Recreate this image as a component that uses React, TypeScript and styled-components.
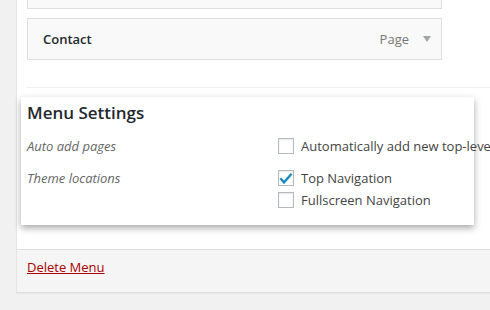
import styled, { createGlobalStyle } from "styled-components";

const GlobalStyle = createGlobalStyle`
  html, body {
    margin: 0;
    padding: 0;
    overflow: hidden;
    background: #f1f1f1;
    font-family: "Open Sans", "Liberation Sans", sans-serif;
    font-size: 13px;
    color: #444;
  }
`;

const Page = styled.div`
  width: 490px;
  height: 310px;
  overflow: hidden;
  padding-left: 16px;
  box-sizing: border-box;
`;

const Panel = styled.div`
  width: 520px;
  background: #fff;
  border-left: 1px solid #e5e5e5;
  border-bottom: 1px solid #dfdfdf;
  box-shadow: 0 1px 1px rgba(0, 0, 0, 0.04);
`;

const Body = styled.div`
  padding: 0 0 0 10px;
`;

const ItemList = styled.ul`
  list-style: none;
  margin: -33px 0 0;
  padding: 0;
  display: flex;
  flex-direction: column;
  gap: 9px;
`;

const Item = styled.li`
  width: 415px;
  height: 42px;
  box-sizing: border-box;
  border: 1px solid #dfdfdf;
  background: #f9f9f9;
  display: flex;
  align-items: center;
  padding: 0 10px 0 15px;
`;

const ItemTitle = styled.span`
  flex: 1;
  font-weight: 600;
  color: #23282d;
`;

const ItemType = styled.span`
  color: #777;
  margin-right: 14px;
`;

const Arrow = () => (
  <svg width="8" height="6" viewBox="0 0 8 6">
    <path d="M0 0 L8 0 L4 6 Z" fill="#a0a5aa" />
  </svg>
);

const Settings = styled.div`
  margin-top: 27px;
  border-top: 1px solid #eee;
  padding-top: 9px;
  padding-bottom: 24px;
`;

const SettingsBox = styled.div`
  margin-left: -6px;
  width: 453px;
  box-sizing: border-box;
  background: #fff;
  padding: 4px 6px 14px;
  box-shadow: 0 3px 7px rgba(0, 0, 0, 0.35);
`;

const Heading = styled.h3`
  margin: 0;
  font-size: 17px;
  line-height: 23px;
  font-weight: 600;
  color: #23282d;
`;

const Grid = styled.div`
  margin-top: 11px;
  display: grid;
  grid-template-columns: 251px 1fr;
  row-gap: 10px;
`;

const Label = styled.div`
  font-style: italic;
  color: #666;
  line-height: 22px;
`;

const Options = styled.div`
  display: flex;
  flex-direction: column;
`;

const Option = styled.label`
  display: flex;
  align-items: center;
  gap: 7px;
  line-height: 22px;
  white-space: nowrap;
  color: #444;
`;

const Box = styled.span`
  width: 16px;
  height: 16px;
  box-sizing: border-box;
  border: 1px solid #b4b9be;
  background: #fff;
  box-shadow: inset 0 1px 2px rgba(0, 0, 0, 0.1);
  display: flex;
  align-items: center;
  justify-content: center;
  flex-shrink: 0;
`;

const Checkbox = ({ checked }: { checked?: boolean }) => (
  <Box>
    {checked && (
      <svg width="14" height="14" viewBox="0 0 14 14">
        <path
          d="M2.2 8.2 L5 11.4 L11.8 3.6"
          fill="none"
          stroke="#1e8cbe"
          strokeWidth="2.4"
          strokeLinecap="square"
        />
      </svg>
    )}
  </Box>
);

const Footer = styled.div`
  border-top: 1px solid #dfdfdf;
  background: #f5f5f5;
  padding: 6px 10px 14px;
  line-height: 22px;
`;

const DeleteLink = styled.a`
  color: #a00;
  text-decoration: underline;
`;

export default function App() {
  return (
    <>
      <GlobalStyle />
      <Page>
        <Panel>
          <Body>
            <ItemList>
              {/* previous item, scrolled mostly out of view */}
              <Item />
              <Item>
                <ItemTitle>Contact</ItemTitle>
                <ItemType>Page</ItemType>
                <Arrow />
              </Item>
            </ItemList>
            <Settings>
              <SettingsBox>
                <Heading>Menu Settings</Heading>
                <Grid>
                  <Label>Auto add pages</Label>
                  <Options>
                    <Option>
                      <Checkbox />
                      Automatically add new top-level pages to this menu
                    </Option>
                  </Options>
                  <Label>Theme locations</Label>
                  <Options>
                    <Option>
                      <Checkbox checked />
                      Top Navigation
                    </Option>
                    <Option>
                      <Checkbox />
                      Fullscreen Navigation
                    </Option>
                  </Options>
                </Grid>
              </SettingsBox>
            </Settings>
          </Body>
          <Footer>
            <DeleteLink href="#">Delete Menu</DeleteLink>
          </Footer>
        </Panel>
      </Page>
    </>
  );
}
